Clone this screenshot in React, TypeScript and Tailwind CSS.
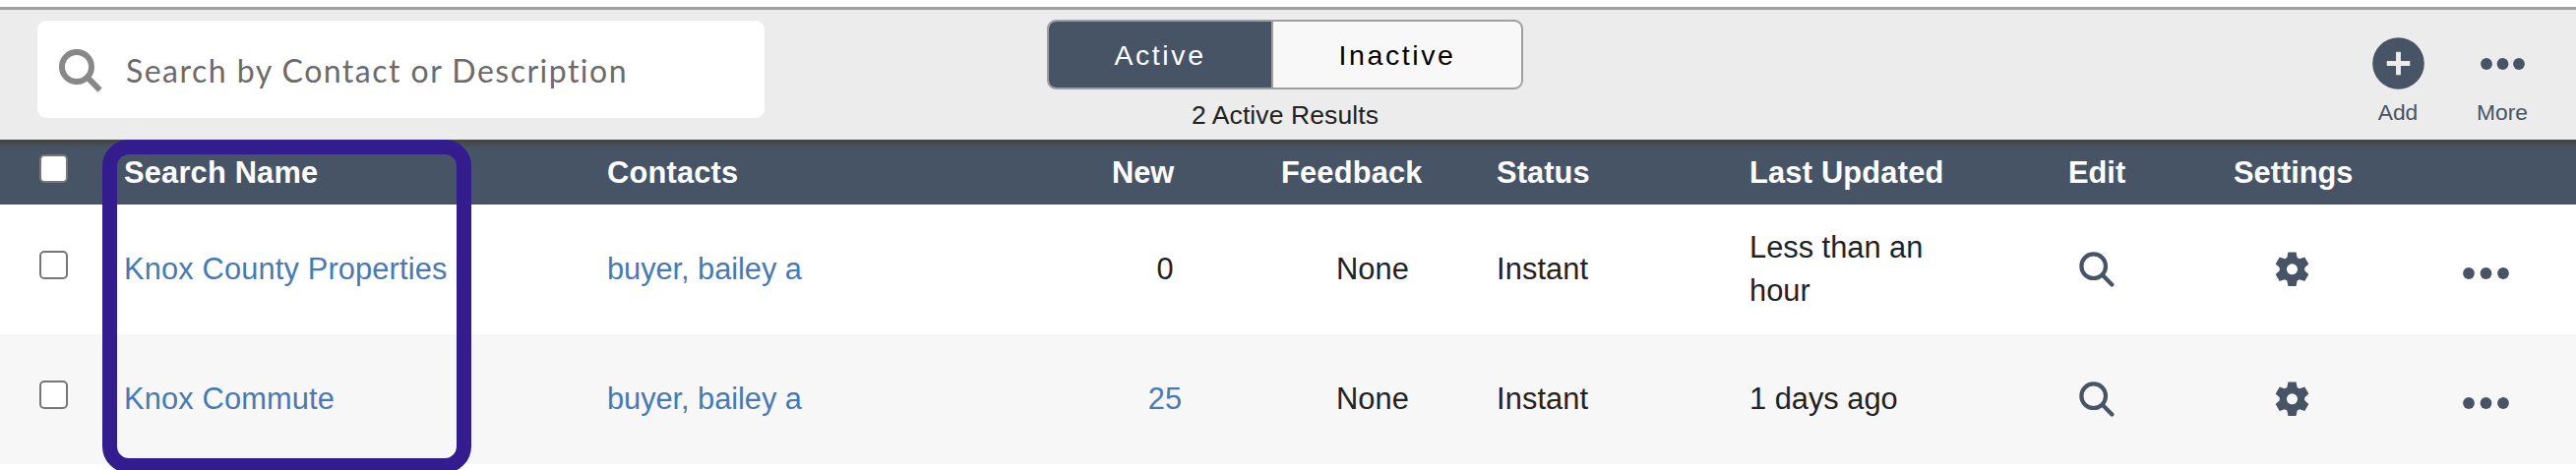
const S = '#475466';

type MagnifierProps = { size: number; color: string; w: number; cap: 'butt' | 'round' };

function Magnifier({ size, color, w, cap }: MagnifierProps) {
  return (
    <svg width={size} height={size} viewBox="0 0 36 36" fill="none" stroke={color} strokeWidth={w} strokeLinecap={cap} className="block shrink-0">
      <circle cx="14.7" cy="14.7" r="12.3" />
      <path d={cap === 'round' ? 'M23.8 23.8 L33.4 33.4' : 'M23.5 23.5 L34 34'} />
    </svg>
  );
}

function Gear() {
  return (
    <svg width="35" height="36" viewBox="0 0 35 37" className="block shrink-0">
      <path
        fillRule="evenodd"
        fill={S}
        d="M13.3 0.5h8.4l1.1 5.6 2.5 1.4 5.3-1.8 4.2 7.2-4.2 3.7v3.3l4.2 3.7-4.2 7.2-5.3-1.8-2.5 1.4-1.1 5.6h-8.4l-1.1-5.6-2.5-1.4-5.3 1.8-4.2-7.2 4.2-3.7v-3.3l-4.2-3.7 4.2-7.2 5.3 1.8 2.5-1.4zM17.5 12.6a5.7 5.7 0 1 0 0 11.4a5.7 5.7 0 1 0 0-11.4z"
      />
    </svg>
  );
}

function Dots({ width }: { width: number }) {
  return (
    <svg width={width} height="12" viewBox={`0 0 ${width} 12`} fill={S} className="block shrink-0">
      <circle cx="6" cy="6" r="5.9" />
      <circle cx={width / 2} cy="6" r="5.9" />
      <circle cx={width - 6} cy="6" r="5.9" />
    </svg>
  );
}

const grid =
  'grid grid-cols-[126px_491px_513px_172px_219px_257px_324px_167px_234px_115px]';

const rows = [
  { name: 'Knox County Properties', count: '0', updated: 'Less than an hour' },
  { name: 'Knox Commute', count: '25', updated: '1 days ago' },
];

function Box() {
  return <span className="block size-[29px] rounded-[5px] border-2 border-[#767676] bg-white" />;
}

export default function App() {
  return (
    <div className="relative h-[478px] w-[2618px] overflow-hidden bg-white pt-[7px] font-['Liberation_Sans',Arial,sans-serif] text-[30.8px] leading-[44px] text-[#222]">
      <header className="flex h-[135px] items-start border-t-[3px] border-[#9f9f9f] bg-[#ececec]">
        <div className="mt-[11px] ml-[38px] flex h-[99px] w-[739px] items-center rounded-[9px] bg-white pt-[3px] pl-[22px] font-[Lato,sans-serif] text-[32px] text-[#6b6b6b]">
          <Magnifier size={44} color="#888" w={4.9} cap="butt" />
          <span className="ml-[24px] tracking-[1.48px] whitespace-nowrap">Search by Contact or Description</span>
        </div>
        <div className="mt-[10px] ml-[287px] w-[484px]">
          <div className="flex h-[71px] w-full overflow-hidden rounded-[9px] border-2 border-[#9f9f9f] bg-[#f8f8f8] text-[28.5px] leading-[69px] tracking-[2.6px]">
            <div className="w-[228px] border-r-2 border-[#9f9f9f] bg-[#475466] text-center text-white">Active</div>
            <div className="flex-1 text-center text-black">Inactive</div>
          </div>
          <div className="pt-[6px] text-center text-[26.5px] leading-[40px] tracking-[0.1px]">2 Active Results</div>
        </div>
        <div className="mt-[28px] ml-[849px] flex w-[80px] flex-col items-center text-[22.8px] text-[#475466]">
          <svg width="53" height="53" viewBox="0 0 54 54" className="block">
            <circle cx="27" cy="27" r="26.8" fill={S} />
            <path d="M27 15v24M15 27h24" stroke="#ececec" strokeWidth="5" />
          </svg>
          <span className="leading-[47px]">Add</span>
        </div>
        <div className="mt-[28px] ml-[26px] flex w-[80px] flex-col items-center text-[22.8px] text-[#475466]">
          <div className="flex h-[53px] items-center"><Dots width={45} /></div>
          <span className="leading-[47px]">More</span>
        </div>
      </header>

      <div className={`${grid} h-[66px] items-center bg-[#475466] bg-[linear-gradient(to_bottom,#444_0px,#464749_3px,#475466_8px)] font-bold text-white`}>
        <div className="-mt-[8px] pl-[40px]"><Box /></div>
        <div className="pt-[2px] tracking-[0.2px]">Search Name</div>
        <div className="pt-[2px] tracking-[0.2px]">Contacts</div>
        <div className="pt-[2px]">New</div>
        <div className="pt-[2px] tracking-[0.2px]">Feedback</div>
        <div className="pt-[2px] tracking-[0.1px]">Status</div>
        <div className="pt-[2px] tracking-[0.2px]">Last Updated</div>
        <div className="pt-[2px]">Edit</div>
        <div className="pt-[2px] pl-px">Settings</div>
        <div />
      </div>

      {rows.map((r, i) => (
        <div key={r.name} className={`${grid} h-[132px] items-center ${i ? 'bg-[#f7f7f7]' : 'bg-white'}`}>
          <div className="-mt-[10px] pl-[40px]"><Box /></div>
          <div className="tracking-[0.15px] text-[#477ab5]">{r.name}</div>
          <div className="tracking-[-0.05px] text-[#477ab5]">buyer, bailey a</div>
          <div className={`w-[108px] text-center ${i ? 'text-[#477ab5]' : ''}`}>{r.count}</div>
          <div className="pl-[56px] tracking-[0.1px]">None</div>
          <div className="tracking-[0.1px]">Instant</div>
          <div className="w-[200px]">{r.updated}</div>
          <div className="pl-[11px]"><Magnifier size={36} color={S} w={4.2} cap="round" /></div>
          <div className="pl-[43px]"><Gear /></div>
          <div className="pt-[8px]"><Dots width={47} /></div>
        </div>
      ))}

      <div className="absolute top-[142px] left-[104px] h-[339px] w-[375px] rounded-[27px] border-[15px] border-[#331c8e]" />
    </div>
  );
}
